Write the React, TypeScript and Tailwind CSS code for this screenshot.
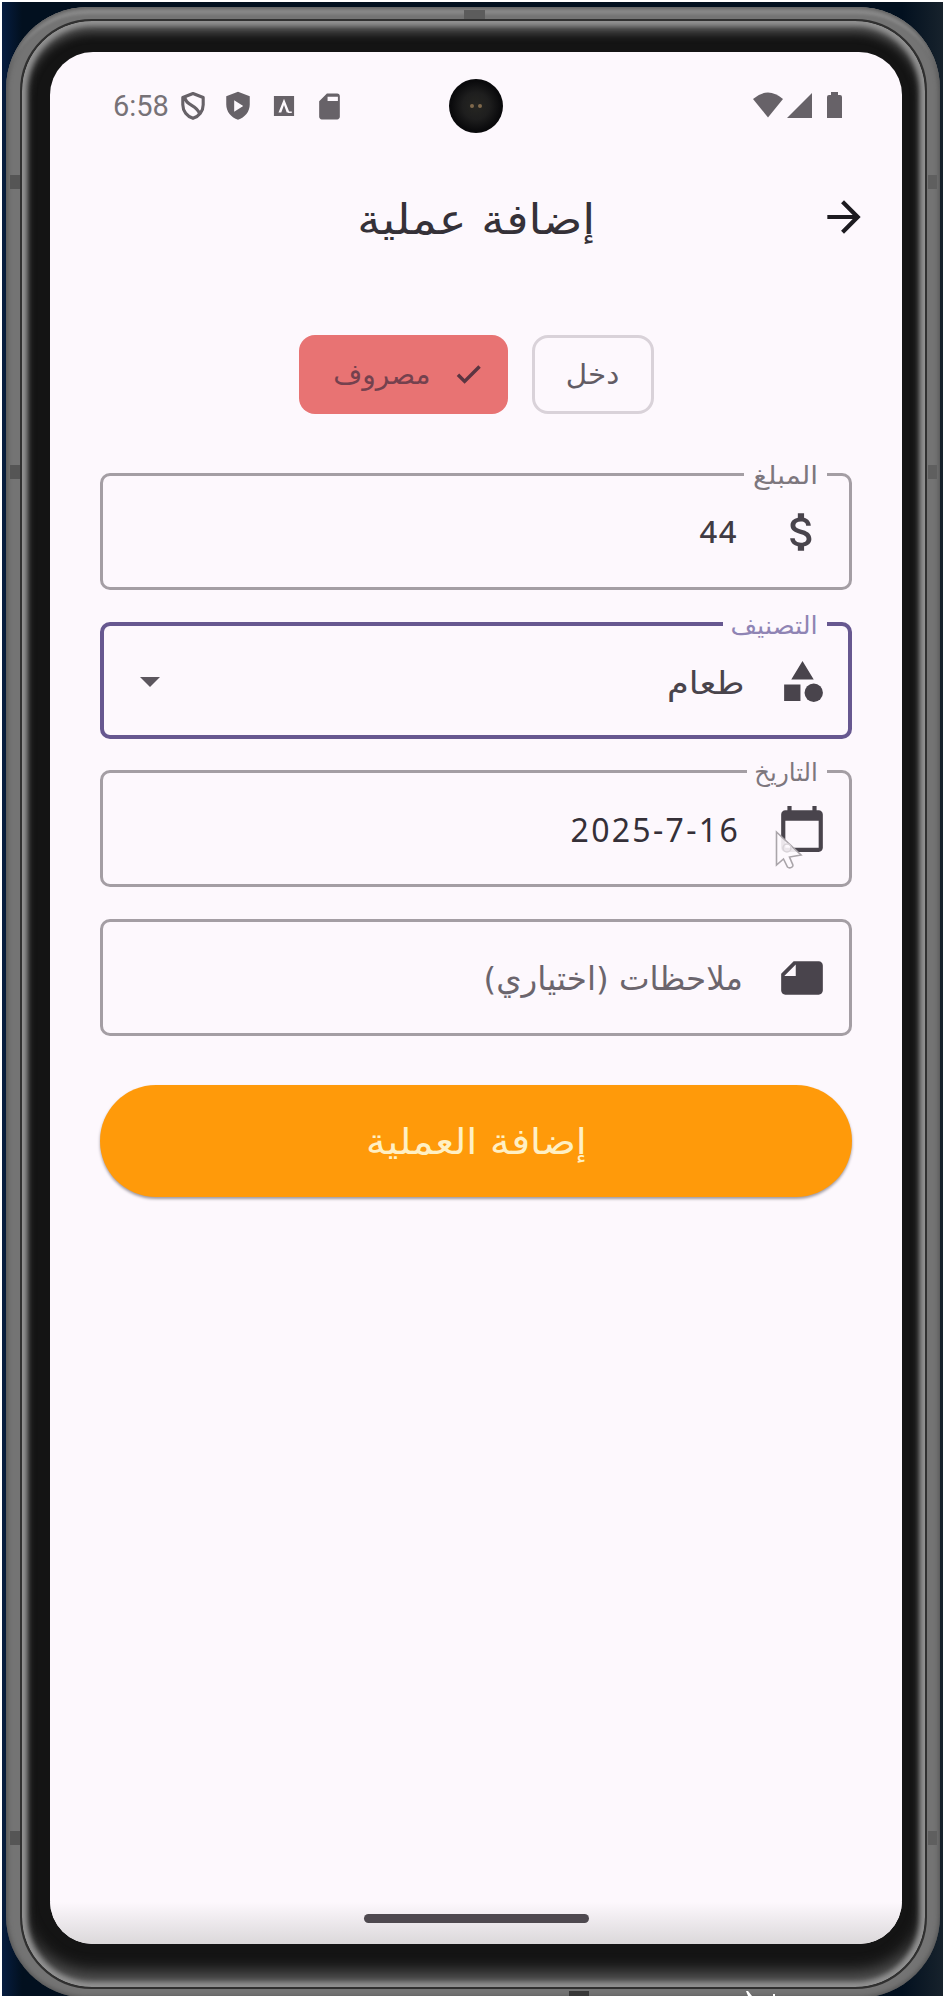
import type { ReactNode } from "react";

const arabic = "inline-block font-['DejaVu_Sans',sans-serif] whitespace-nowrap leading-none";

function Icon({ children, className }: { children: ReactNode; className: string }) {
  return (
    <svg viewBox="0 0 24 24" fill="currentColor" className={className}>
      {children}
    </svg>
  );
}

function StatusBar() {
  return (
    <div className="relative flex h-[108px] items-center pl-[63px] pr-[56px] text-[#676268]">
      <span className="w-[68px] font-[Roboto,sans-serif] text-[29px] leading-none text-[#777277]">6:58</span>
      <Icon className="-ml-[5px] size-[34px]">
        <path
          fill="none"
          stroke="currentColor"
          strokeWidth="2.2"
          strokeLinejoin="round"
          d="M12 3.200L4.800 6v5.200c0 4.400 3 8.200 7.200 9.500 4.200-1.300 7.200-5.100 7.200-9.500V6zM6.200 5.600C6.500 12 15 11 16.600 17.600"
        />
      </Icon>
      <Icon className="ml-[11px] size-[34px]">
        <path
          fillRule="evenodd"
          d="M12 2L3.700 5.200V11c0 5 3.500 9.300 8.300 10.700 4.800-1.400 8.300-5.700 8.300-10.700V5.200zM9.300 8l6.400 4-6.400 4z"
        />
      </Icon>
      <Icon className="ml-[18px] size-[22px]">
        <path fillRule="evenodd" d="M1 1h22v22H1zM12 4L6 19h3l3-8 3 8h3z" />
        <path fill="#fdf8fd" d="M16.500 18h4v1.600h-4z" />
      </Icon>
      <Icon className="ml-[19px] size-[31px]">
        <path
          fillRule="evenodd"
          d="M18 2h-8L4 8v12c0 1.100.9 2 2 2h12c1.100 0 2-.9 2-2V4c0-1.100-.9-2-2-2zM10.500 4.500h8v3.200h-8z"
        />
      </Icon>
      <div className="absolute left-[399px] top-[27px] flex size-[54px] items-center justify-center rounded-full bg-[radial-gradient(circle,#262622_0,#1e1e1e_35%,#0a0a0c_65%)]">
        <div className="flex items-center justify-center gap-1">
          <div className="size-[4px] rounded-full bg-[#80694c]" />
          <div className="size-[4px] rounded-full bg-[#80694c]" />
        </div>
      </div>
      <svg viewBox="0 0 94 28" className="ml-auto h-[28px] w-[94px] -translate-y-px" fill="currentColor">
        <path d="M1 8Q16-5 31 8L16 26.500z" />
        <path d="M60 2v25H35z" />
        <path d="M75 6q0-2 2-2h2V1h7v3h2q2 0 2 2v21H75z" />
      </svg>
    </div>
  );
}

function Field({
  label,
  icon,
  children,
  focused = false,
  className,
}: {
  label?: ReactNode;
  icon: ReactNode;
  children: ReactNode;
  focused?: boolean;
  className: string;
}) {
  return (
    <div
      className={`relative flex items-center rounded-[10px] ${
        focused ? "border-4 border-[#675890] pr-[21px]" : "border-[3px] border-[#a49ea4] pr-[22px]"
      } ${className}`}
    >
      <div className="flex size-[50px] items-center justify-center text-[#49444c]">{icon}</div>
      {children}
      {label}
    </div>
  );
}

function FieldLabel({ text, className, textClass }: { text: string; className: string; textClass: string }) {
  return (
    <div className={`absolute -top-[13px] flex h-[30px] justify-start bg-[#fdf8fd] pr-[9px] ${className}`}>
      <span className={`${arabic} origin-right ${textClass}`}>{text}</span>
    </div>
  );
}

function Form() {
  return (
    <main className="flex flex-col px-[50px]">
      <div className="flex justify-center gap-[24px] pt-[80px]">
        <div className="flex h-[79px] w-[122px] items-center justify-center rounded-[16px] border-[3px] border-[#d9d2d9] text-[#625c64]">
          <span className={`${arabic} scale-x-105 text-[28px]`}>دخل</span>
        </div>
        <div className="flex h-[79px] w-[209px] items-center rounded-[16px] bg-[#e87373] pr-[24px] text-[#74414e]">
          <Icon className="size-[31px] -translate-y-px text-[#5b3541]">
            <path d="M9 16.200L4.800 12l-1.900 1.900L9 20 21.500 7.500l-1.900-1.900z" />
          </Icon>
          <span className={`${arabic} mr-[22px] origin-right text-[28px]`}>مصروف</span>
        </div>
      </div>

      <Field
        className="mt-[59px] h-[117px]"
        label={<FieldLabel text="المبلغ" className="right-[22px] w-[83px]" textClass="text-[25px] scale-x-[1.120] text-[#7d777e]" />}
        icon={
          <Icon className="size-[50px]">
            <path d="M11.800 10.900c-2.270-.59-3-1.200-3-2.150 0-1.090 1.010-1.850 2.700-1.850 1.780 0 2.440.85 2.500 2.100h2.210c-.07-1.720-1.120-3.300-3.210-3.810V3h-3v2.160c-1.940.42-3.500 1.680-3.500 3.610 0 2.310 1.910 3.460 4.700 4.130 2.500.6 3 1.480 3 2.410 0 .69-.49 1.790-2.700 1.790-2.060 0-2.870-.92-2.980-2.100h-2.200c.12 2.190 1.760 3.420 3.680 3.830V21h3v-2.150c1.950-.37 3.500-1.500 3.500-3.550 0-2.840-2.430-3.810-4.700-4.400z" />
          </Icon>
        }
      >
        <span
          dir="ltr"
          className="mr-[39px] font-['Noto_Sans',sans-serif] text-[31px] font-medium leading-none tracking-[1.500px] text-[#403b43]"
        >
          44
        </span>
      </Field>

      <Field
        focused
        className="mt-[32px] h-[117px]"
        label={<FieldLabel text="التصنيف" className="right-[21px] w-[104px]" textClass="text-[25px] scale-x-[1.030] text-[#8f84b4]" />}
        icon={
          <Icon className="size-[49px] translate-y-px">
            <path d="M12 2l-5.500 9h11zM3 13.500h8v8H3z" />
            <circle cx="17.500" cy="17.500" r="4.500" />
          </Icon>
        }
      >
        <span className={`${arabic} mr-[33px] origin-right translate-y-[2px] scale-x-[1.100] text-[32px] text-[#49444c]`}>
          طعام
        </span>
        <svg viewBox="0 0 20 10" className="mr-auto ml-[36px] h-[10px] w-[20px] translate-y-px" fill="#5c565e">
          <path d="M0 0h20L10 10z" />
        </svg>
      </Field>

      <Field
        className="mt-[31px] h-[117px]"
        label={<FieldLabel text="التاريخ" className="right-[22px] w-[80px]" textClass="text-[25px] scale-x-[0.980] text-[#7d777e]" />}
        icon={
          <Icon className="size-[50px]">
            <path d="M20 3h-1V1h-2v2H7V1H5v2H4c-1.100 0-2 .9-2 2v16c0 1.100.9 2 2 2h16c1.100 0 2-.9 2-2V5c0-1.100-.9-2-2-2zm0 18H4V8h16v13z" />
          </Icon>
        }
      >
        <span
          dir="ltr"
          className="mr-[37px] translate-y-px font-['Noto_Sans',sans-serif] text-[32px] leading-none tracking-[2.300px] text-[#353038]"
        >
          2025-7-16
        </span>
        <svg viewBox="0 0 28 40" className="absolute right-[46px] top-[57px] h-[40px] w-[28px]">
          <path
            d="M1.500 2v33l7-6 4 8c2 2 7 0 5-3l-3-7 11.500-2z"
            fill="#fdf8fd"
            fillOpacity=".9"
            stroke="#aaa5aa"
            strokeWidth="1.600"
          />
          <circle cx="12" cy="18" r="4" fill="none" stroke="#d8d3d8" strokeWidth="1.500" />
        </svg>
      </Field>

      <Field
        className="mt-[32px] h-[117px]"
        icon={
          <Icon className="size-[50px] -scale-x-100">
            <path d="M22 10l-6-6H4c-1.100 0-2 .9-2 2v12.010c0 1.100.9 1.990 2 1.990l16-.01c1.100 0 2-.89 2-1.990v-8zm-7-4.500l5.500 5.500H15V5.500z" />
          </Icon>
        }
      >
        <span className={`${arabic} mr-[34px] origin-right translate-y-[2px] text-[32.500px] text-[#6b656d]`}>
          ملاحظات (اختياري)
        </span>
      </Field>

      <button className="mt-[49px] flex h-[112px] items-center justify-center rounded-full bg-[#ff9a0a] text-[#fff0c4] shadow-[0_2px_3px_#a09aa0]">
        <span className={`${arabic} translate-y-px scale-x-[1.100] text-[36px]`}>إضافة العملية</span>
      </button>
    </main>
  );
}

export default function App() {
  return (
    <div className="h-[1998px] w-[945px] bg-white p-[2px]">
      <div className="h-[1994px] overflow-hidden bg-[linear-gradient(90deg,#061d40_0,#02101f_20px,#02101f_900px,#17222c_100%)] pl-[4px] pr-[3px] pt-[5px]">
        <div className="relative h-[1991px] rounded-[82px] bg-[#747474] pl-[14px] pr-[13px] pt-[12px] shadow-[inset_0_0_5px_1px_#505050,inset_0_9px_3px_-2px_#8c8c8c]">
          <div className="absolute left-[458px] top-[3px] h-[9px] w-[21px] bg-[#5c5c5c]" />
          <div className="absolute left-[4px] top-[168px] h-[14px] w-[10px] bg-[#555]" />
          <div className="absolute left-[4px] top-[458px] h-[14px] w-[10px] bg-[#555]" />
          <div className="absolute left-[4px] top-[1824px] h-[14px] w-[10px] bg-[#555]" />
          <div className="absolute right-[3px] top-[168px] h-[14px] w-[9px] bg-[#5f5f5f]" />
          <div className="absolute right-[3px] top-[458px] h-[14px] w-[9px] bg-[#5f5f5f]" />
          <div className="absolute right-[3px] top-[1824px] h-[14px] w-[9px] bg-[#5f5f5f]" />
          <div className="h-[1970px] rounded-[72px] border-2 border-[#303030] bg-[#141414] pl-[28px] pr-[23px] pt-[31px] shadow-[inset_0_0_5px_5px_#929292,inset_0_8px_10px_4px_#505050,inset_0_-18px_16px_-3px_#585858]">
            <div
              dir="rtl"
              className="relative flex h-[1892px] flex-col overflow-hidden rounded-[43px] bg-[#fdf8fd]"
            >
              <div dir="ltr">
                <StatusBar />
              </div>
              <header className="relative flex h-[95px] items-center justify-center">
                <Icon className="absolute right-[33px] top-[32px] size-[50px] text-[#1d1b20]">
                  <path d="M12 4l-1.410 1.410L16.170 11H4v2h12.170l-5.580 5.590L12 20l8-8z" />
                </Icon>
                <h1 className={`${arabic} translate-y-[12px] scale-x-[1.110] text-[42px] text-[#353138]`}>إضافة عملية</h1>
              </header>
              <Form />
              <div className="mt-auto flex h-[42px] items-start justify-center bg-linear-to-b from-[#fdf8fd] to-[#dbd8da] pt-[12px]">
                <div className="h-[9px] w-[225px] rounded-full bg-[#4e494f]" />
              </div>
            </div>
          </div>
          <div className="absolute left-[563px] top-[1984px] h-[5px] w-[20px] bg-[#383838]" />
          <svg viewBox="0 0 34 5" className="absolute left-[739px] top-[1984px] h-[5px] w-[34px]" fill="#fff">
            <path d="M1 0l2 0 4 5H3zM28 3l2 0 0 2h-2z" />
          </svg>
        </div>
      </div>
    </div>
  );
}
